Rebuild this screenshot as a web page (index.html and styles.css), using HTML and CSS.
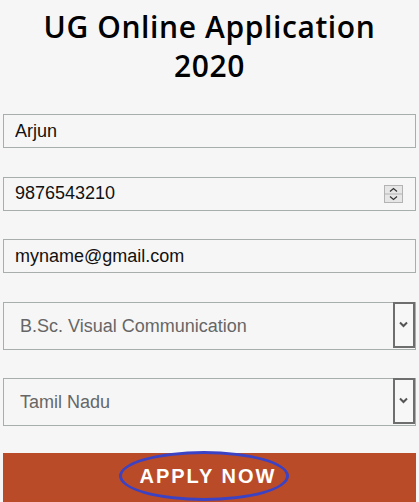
FILE: index.html
```html
<!DOCTYPE html>
<html lang="en">
<head>
    <meta charset="UTF-8">
    <meta name="viewport" content="width=device-width, initial-scale=1.0">
    <title>UG Online Application 2020</title>
    <link rel="stylesheet" href="styles.css">
</head>
<body>
    <div class="page">
        <h1 class="title">UG Online Application<br>2020</h1>

        <form class="apply-form">
            <input class="field" type="text" name="name" value="Arjun">

            <div class="overlay">
                <input class="field" type="number" name="phone" value="9876543210">
                <svg class="spinner" width="19" height="18" viewBox="0 0 19 18">
                    <rect x="0.5" y="0.5" width="18" height="17" fill="#e6e6e6" stroke="#b3b3b3"/>
                    <line x1="0.5" y1="9" x2="18.5" y2="9" stroke="#b3b3b3"/>
                    <path d="M6 6.5 L9.5 3.5 L13 6.5" fill="none" stroke="#333" stroke-width="1.2"/>
                    <path d="M6 11.5 L9.5 14.5 L13 11.5" fill="none" stroke="#333" stroke-width="1.2"/>
                </svg>
            </div>

            <input class="field" type="email" name="email" value="myname@gmail.com">

            <div class="overlay">
                <select class="field select" name="course">
                    <option>B.Sc. Visual Communication</option>
                </select>
                <svg class="select-arrow" width="22" height="46" viewBox="0 0 22 46">
                    <rect x="1" y="1" width="20" height="44" fill="#f7f7f7" stroke="#6e6e6e" stroke-width="2"/>
                    <path d="M7 20.5 L10.5 24 L14 20.5" fill="none" stroke="#555" stroke-width="2"/>
                </svg>
            </div>

            <div class="overlay">
                <select class="field select" name="state">
                    <option>Tamil Nadu</option>
                </select>
                <svg class="select-arrow" width="22" height="46" viewBox="0 0 22 46">
                    <rect x="1" y="1" width="20" height="44" fill="#f7f7f7" stroke="#6e6e6e" stroke-width="2"/>
                    <path d="M7 20.5 L10.5 24 L14 20.5" fill="none" stroke="#555" stroke-width="2"/>
                </svg>
            </div>

            <button class="apply-btn" type="submit"><span class="apply-ring">APPLY NOW</span></button>
        </form>
    </div>
</body>
</html>
```

FILE: styles.css
```css
body {
    margin: 0;
    padding: 0;
    background-color: #f6f6f6;
    font-family: "Liberation Sans", Arial, sans-serif;
}

.page {
    padding: 7px 3px 0;
}

.title {
    margin: 0 0 29px;
    font-family: "Open Sans", sans-serif;
    font-weight: 600;
    font-size: 30px;
    line-height: 39px;
    letter-spacing: 0.6px;
    text-align: center;
    color: #000;
}

.apply-form {
    display: flex;
    flex-direction: column;
    gap: 28.5px;
}

.field {
    box-sizing: border-box;
    width: 100%;
    height: 34px;
    margin: 0;
    padding: 0 11px;
    border: 1px solid #a8aeae;
    border-radius: 0;
    background: #f6f6f6;
    font-family: "Liberation Sans", Arial, sans-serif;
    font-size: 18px;
    color: #111;
    outline: none;
}

.field[type=number] {
    -moz-appearance: textfield;
}

    .field::-webkit-inner-spin-button,
    .field::-webkit-outer-spin-button {
        -webkit-appearance: none;
        margin: 0;
    }

.select {
    -webkit-appearance: none;
    appearance: none;
    height: 48px;
    padding-left: 16px;
    color: #666;
}

.overlay {
    display: grid;
}

    .overlay > * {
        grid-area: 1 / 1;
    }

.spinner {
    justify-self: end;
    align-self: center;
    margin-right: 13px;
}

.select-arrow {
    justify-self: end;
    align-self: start;
    margin-right: 1px;
}

.apply-btn {
    display: flex;
    justify-content: center;
    align-items: flex-start;
    height: 50px;
    margin-top: -1.5px;
    padding: 0;
    border: none;
    background-color: #b94b29;
    overflow: visible;
    cursor: pointer;
}

.apply-ring {
    display: inline-flex;
    align-items: center;
    box-sizing: border-box;
    width: 170px;
    height: 50px;
    margin: -2px 12px 0 0;
    padding: 0 6px 0 18px;
    border: 3px solid #3b42c4;
    border-radius: 50%;
    font-family: "Liberation Sans", Arial, sans-serif;
    font-weight: bold;
    font-size: 20px;
    letter-spacing: 2px;
    color: #fff;
}
```
